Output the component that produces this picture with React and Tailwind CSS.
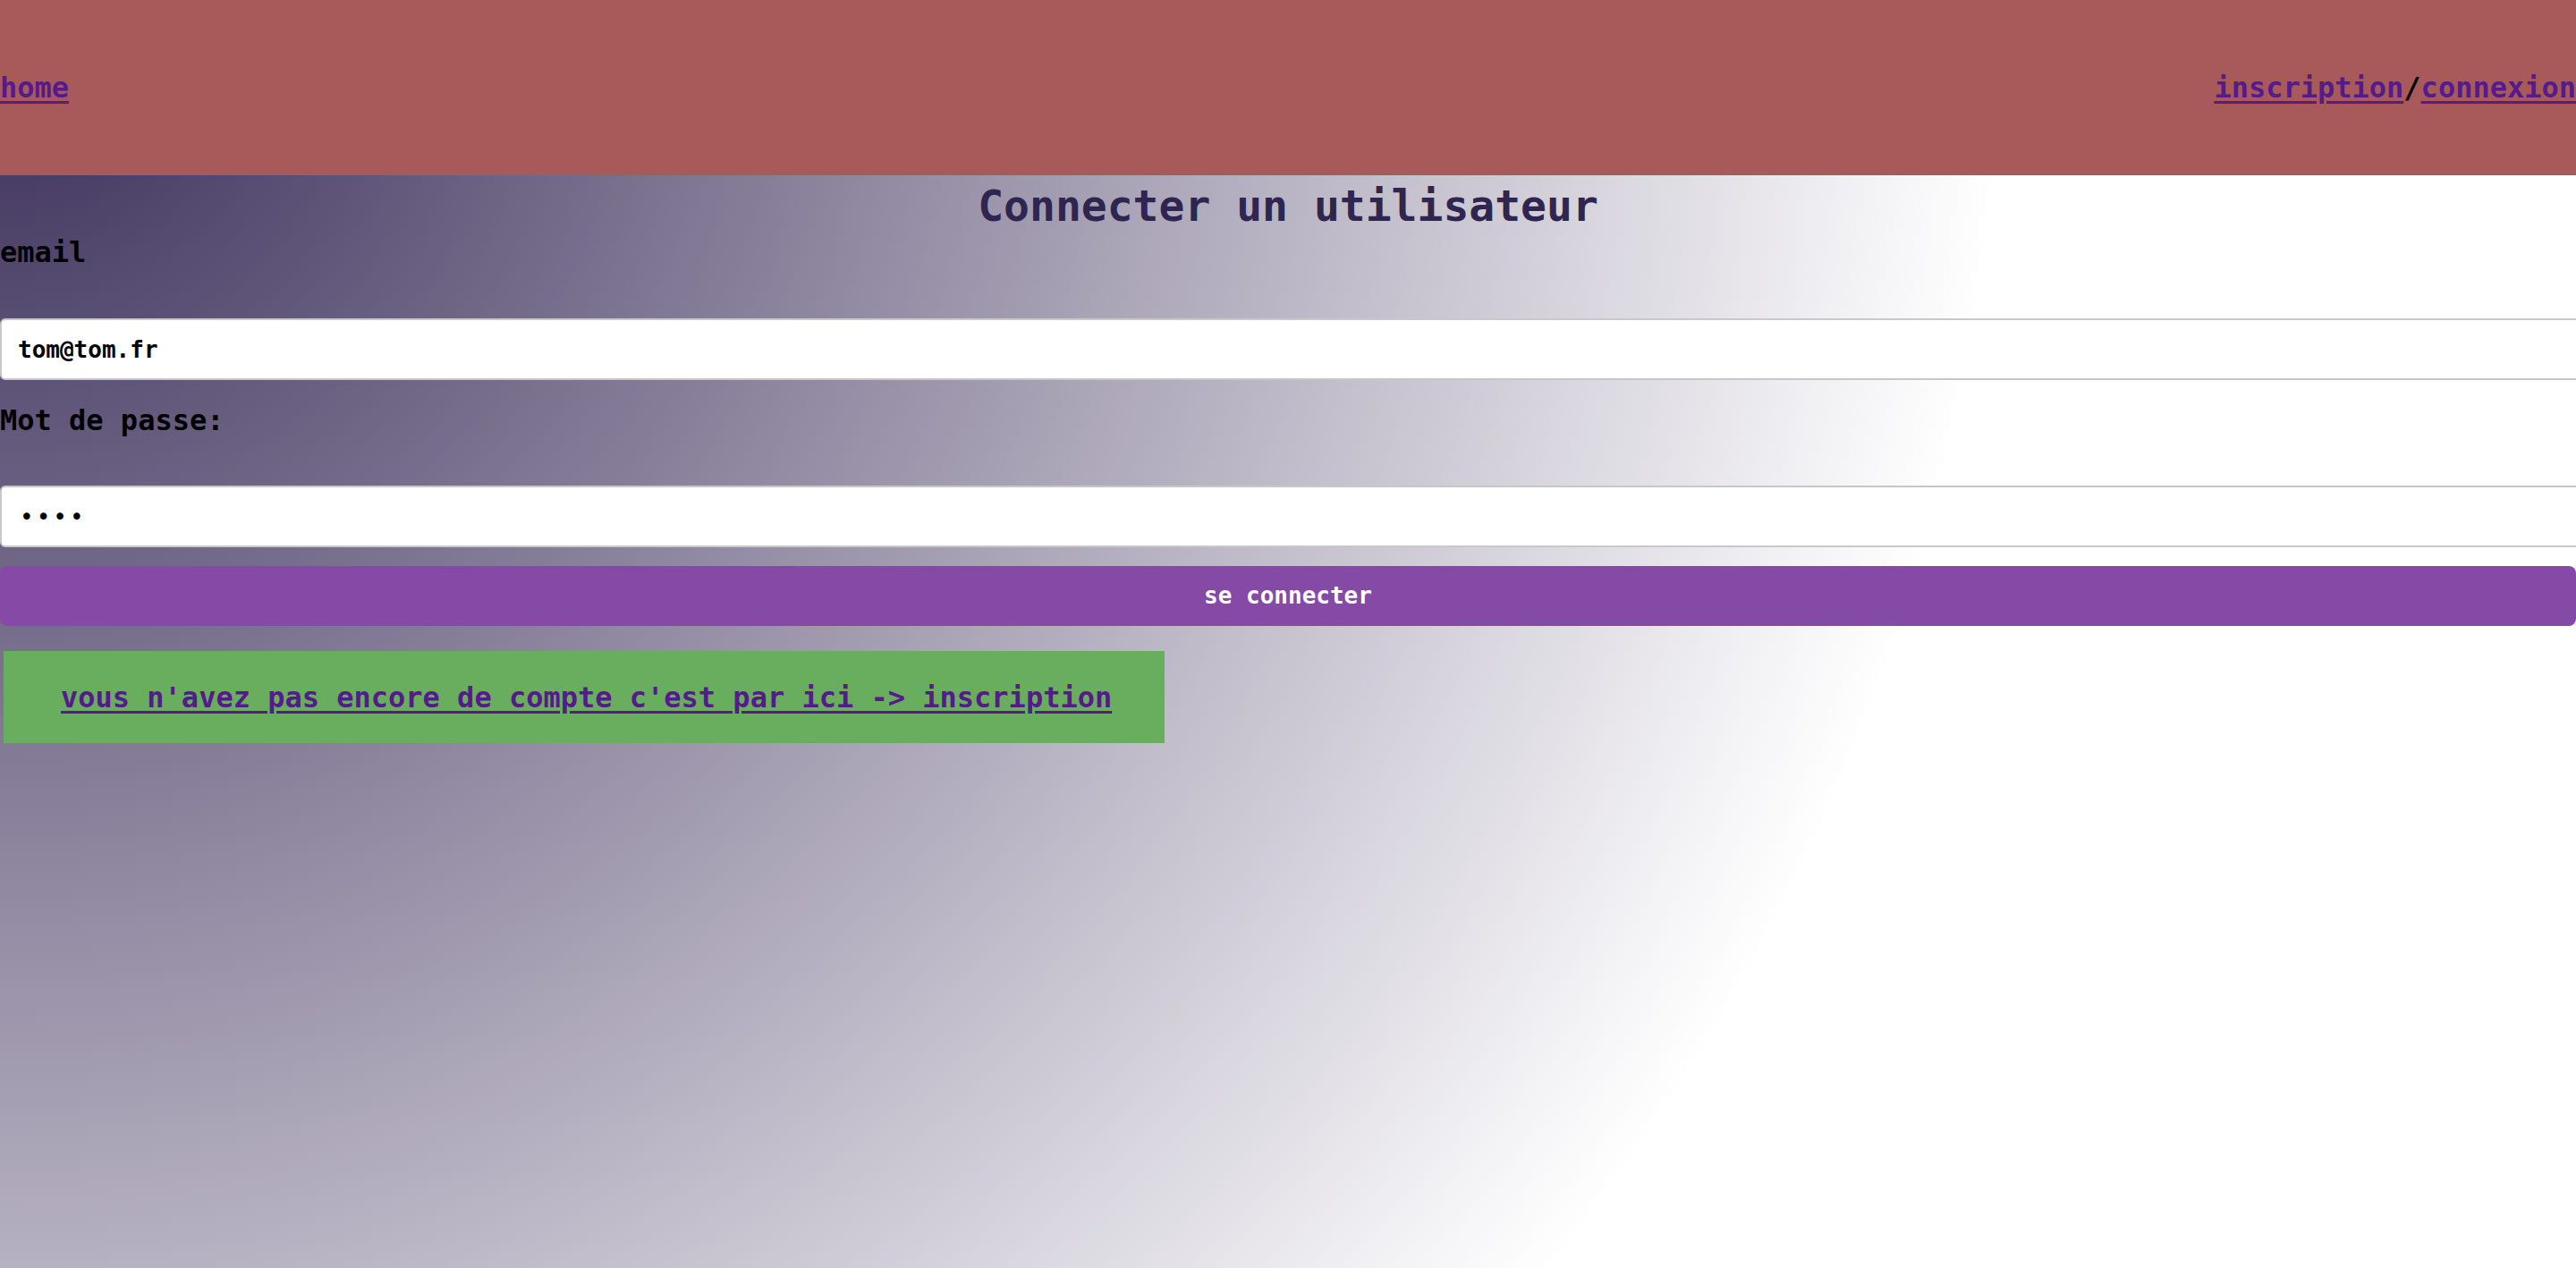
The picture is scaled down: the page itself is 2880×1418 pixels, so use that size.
import React from "react";

export default function App() {
  return (
    <div
      className="relative w-full min-h-screen overflow-hidden bg-[radial-gradient(circle_at_top_left,#382b57_0px,#ffffff_2240px)] text-black"
      style={{ fontFamily: '"DejaVu Sans Mono", "Liberation Mono", monospace' }}
    >
      <header className="flex h-[196px] items-center justify-between bg-[#a85a5a] text-[32px] font-bold leading-[38px]">
        <a href="#" className="text-[#551a8b] underline decoration-[3px] underline-offset-[4px]">
          home
        </a>
        <div className="flex items-center">
          <a href="#" className="text-[#551a8b] underline decoration-[3px] underline-offset-[4px]">
            inscription
          </a>
          <span className="text-black">/</span>
          <a href="#" className="text-[#551a8b] underline decoration-[3px] underline-offset-[4px]">
            connexion
          </a>
        </div>
      </header>

      <h1 className="h-[69px] text-center text-[48px] font-bold leading-[69px] text-[#2e2650]">
        Connecter un utilisateur
      </h1>

      <form className="flex flex-col" onSubmit={(e) => e.preventDefault()}>
        <label className="mb-[57px] text-[32px] font-bold leading-[34px]">email</label>
        <input
          type="email"
          defaultValue="tom@tom.fr"
          className="box-content h-[65px] w-full rounded-[6px] border-2 border-[#c8c8c8] bg-white px-[18px] text-[26px] font-bold text-black outline-none"
        />
        <label className="mt-[28px] mb-[56px] text-[32px] font-bold leading-[34px]">Mot de passe:</label>
        <input
          type="password"
          defaultValue="azer"
          className="box-content h-[65px] w-full rounded-[6px] border-2 border-[#c8c8c8] bg-white px-[20px] text-[26px] tracking-[3px] text-black outline-none"
        />
        <button
          type="submit"
          className="mt-[21px] h-[67px] w-full rounded-[8px] bg-[#8549a6] text-[26px] font-bold text-white"
        >
          se connecter
        </button>
      </form>

      <div className="ml-[4px] mt-[28px] flex h-[103px] w-[1298px] items-center bg-[#69ad5e] pl-[64px] text-[32px] font-bold leading-[38px]">
        <a href="#" className="text-[#551a8b] underline decoration-[3px] underline-offset-[4px]">
          vous n'avez pas encore de compte c'est par ici -&gt; inscription
        </a>
      </div>
    </div>
  );
}
